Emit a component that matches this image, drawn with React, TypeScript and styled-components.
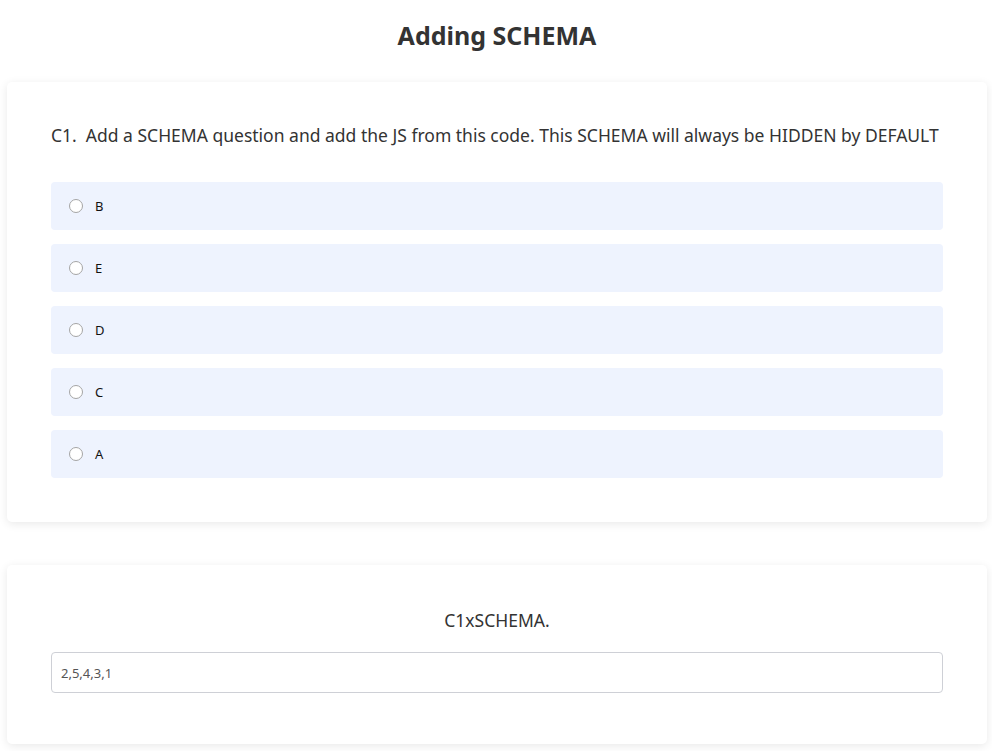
import React from 'react'
import styled, { createGlobalStyle } from 'styled-components'

const options = ['B', 'E', 'D', 'C', 'A']

const App = () => {
    return (
        <>
            <GlobalStyle />
            <PageStyled>
                <TitleStyled>Adding SCHEMA</TitleStyled>
                <CardStyled>
                    <QuestionStyled>C1.&nbsp; Add a SCHEMA question and add the JS from this code. This SCHEMA will always be HIDDEN by DEFAULT</QuestionStyled>
                    <OptionListStyled>
                        {options.map((opt) => (
                            <OptionStyled key={opt}>
                                <RadioStyled type="radio" name="c1" />
                                <OptionLabelStyled>{opt}</OptionLabelStyled>
                            </OptionStyled>
                        ))}
                    </OptionListStyled>
                </CardStyled>
                <CardStyled $compact>
                    <CenterLabelStyled>C1xSCHEMA.</CenterLabelStyled>
                    <InputStyled type="text" defaultValue="2,5,4,3,1" />
                </CardStyled>
            </PageStyled>
        </>
    )
}

export default App

const GlobalStyle = createGlobalStyle`
    body {
        margin: 0;
        background: #fff;
        font-family: "Noto Sans", "Open Sans", sans-serif;
        color: #333;
    }
`
const PageStyled = styled.div`
    display: flex;
    flex-direction: column;
    padding: 0 5px 8px 7px;
`
const TitleStyled = styled.h1`
    margin: 0;
    padding: 17px 0 29px 0;
    text-align: center;
    font-size: 25px;
    font-weight: 700;
    line-height: 36px;
    color: #333;
`
const CardStyled = styled.div<{ $compact?: boolean }>`
    background: #fff;
    border-radius: 5px;
    box-shadow: 0 2px 10px rgba(0, 0, 0, 0.09);
    padding: ${(p) => (p.$compact ? '42px 44px 51px 44px' : '40px 44px 44px 44px')};
    margin-bottom: 43px;
    display: flex;
    flex-direction: column;
`
const QuestionStyled = styled.div`
    font-size: 17.5px;
    line-height: 26px;
    color: #333;
    margin-bottom: 34px;
    white-space: nowrap;
`
const OptionListStyled = styled.div`
    display: flex;
    flex-direction: column;
    gap: 14px;
`
const OptionStyled = styled.label`
    display: flex;
    align-items: center;
    height: 48px;
    padding: 0 18px;
    background: #eef3fe;
    border-radius: 4px;
`
const RadioStyled = styled.input`
    appearance: none;
    width: 14px;
    height: 14px;
    margin: 0 12px 0 0;
    border: 1px solid #a5a5a5;
    border-radius: 50%;
    background: #fff;
`
const OptionLabelStyled = styled.span`
    font-size: 13px;
    color: #111;
`
const CenterLabelStyled = styled.div`
    text-align: center;
    font-size: 17.5px;
    line-height: 26px;
    color: #333;
    margin-bottom: 19px;
`
const InputStyled = styled.input`
    height: 41px;
    box-sizing: border-box;
    padding: 0 9px;
    border: 1px solid #ced0d6;
    border-radius: 4px;
    font-family: "Noto Sans", sans-serif;
    font-size: 13px;
    color: #555;
    outline: none;
`
